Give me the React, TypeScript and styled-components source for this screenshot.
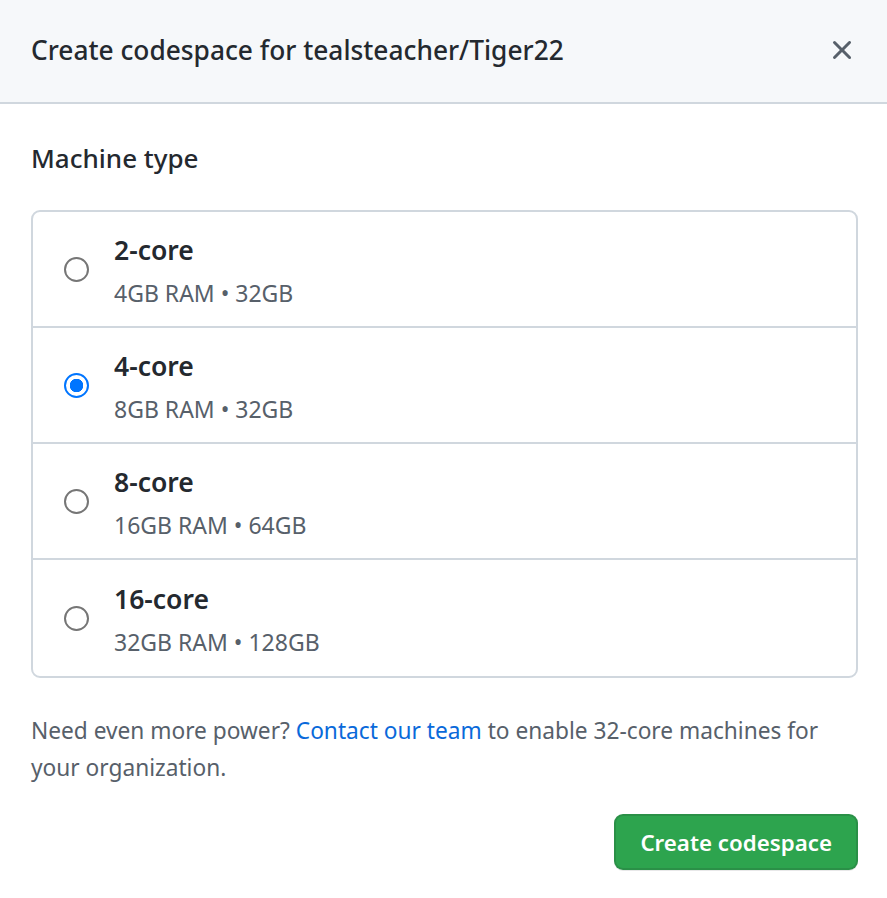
import React, { useState } from "react";
import styled, { createGlobalStyle } from "styled-components";

const GlobalStyle = createGlobalStyle`
  html, body {
    margin: 0;
    padding: 0;
    background: #ffffff;
  }
  body {
    font-family: "Noto Sans", "Open Sans", sans-serif;
    color: #24292f;
  }
`;

const machines = [
  { id: "2", name: "2-core", spec: "4GB RAM • 32GB" },
  { id: "4", name: "4-core", spec: "8GB RAM • 32GB" },
  { id: "8", name: "8-core", spec: "16GB RAM • 64GB" },
  { id: "16", name: "16-core", spec: "32GB RAM • 128GB" },
];

function App(): React.ReactElement {
  const [selected, setSelected] = useState("4");

  return (
    <Dialog>
      <GlobalStyle />
      <Header>
        <Title>Create codespace for tealsteacher/Tiger22</Title>
        <CloseButton aria-label="Close">
          <svg width="32" height="32" viewBox="0 0 16 16" fill="currentColor">
            <path d="M3.72 3.72a.75.75 0 0 1 1.06 0L8 6.94l3.22-3.22a.749.749 0 0 1 1.275.326.749.749 0 0 1-.215.734L9.06 8l3.22 3.22a.749.749 0 0 1-.326 1.275.749.749 0 0 1-.734-.215L8 9.06l-3.22 3.22a.751.751 0 0 1-1.042-.018.751.751 0 0 1-.018-1.042L6.94 8 3.72 4.78a.75.75 0 0 1 0-1.06Z" />
          </svg>
        </CloseButton>
      </Header>
      <Body>
        <SectionLabel>Machine type</SectionLabel>
        <OptionList>
          {machines.map((m) => (
            <Option key={m.id} onClick={() => setSelected(m.id)}>
              <Radio checked={selected === m.id} />
              <OptionText>
                <OptionName>{m.name}</OptionName>
                <OptionSpec>{m.spec}</OptionSpec>
              </OptionText>
            </Option>
          ))}
        </OptionList>
        <Note>
          Need even more power? <Link href="#">Contact our team</Link> to
          enable 32-core machines for your organization.
        </Note>
        <Footer>
          <CreateButton>Create codespace</CreateButton>
        </Footer>
      </Body>
    </Dialog>
  );
}

const Dialog = styled.div`
  width: 887px;
  min-height: 898px;
  background: #ffffff;
`;

const Header = styled.div`
  height: 104px;
  box-sizing: border-box;
  display: flex;
  align-items: center;
  justify-content: space-between;
  padding: 0 29px 2px 31px;
  background: #f6f8fa;
  border-bottom: 2px solid #d0d7de;
`;

const Title = styled.h1`
  margin: 0;
  font-size: 26.3px;
  font-weight: 500;
  color: #24292f;
`;

const CloseButton = styled.button`
  display: flex;
  align-items: center;
  justify-content: center;
  width: 32px;
  height: 32px;
  padding: 0;
  border: none;
  background: transparent;
  color: #57606a;
  cursor: pointer;
`;

const Body = styled.div`
  padding: 36px 29px 0 31px;
`;

const SectionLabel = styled.div`
  font-size: 26px;
  font-weight: 500;
  line-height: 36px;
  margin-bottom: 34px;
`;

const OptionList = styled.div`
  border: 2px solid #d0d7de;
  border-radius: 9px;
  overflow: hidden;
`;

const Option = styled.label`
  display: flex;
  align-items: center;
  box-sizing: border-box;
  height: 114px;
  padding: 0 0 0 31px;
  cursor: pointer;

  & + & {
    height: 116px;
    border-top: 2px solid #d0d7de;
  }

  &:last-child {
    height: 118px;
  }
`;

const Radio = styled.span<{ checked: boolean }>`
  flex: none;
  width: 25px;
  height: 25px;
  box-sizing: border-box;
  border-radius: 50%;
  border: 2px solid ${(p) => (p.checked ? "#0075ff" : "#767676")};
  background: ${(p) =>
    p.checked
      ? "radial-gradient(circle, #0075ff 0, #0075ff 6.5px, #ffffff 7px)"
      : "#ffffff"};
`;

const OptionText = styled.div`
  display: flex;
  flex-direction: column;
  margin-left: 25px;
  margin-top: 4px;
`;

const OptionName = styled.div`
  font-size: 26.5px;
  font-weight: 600;
  line-height: 34px;
  color: #24292f;
`;

const OptionSpec = styled.div`
  font-size: 23px;
  line-height: 32px;
  margin-top: 10px;
  color: #57606a;
`;

const Note = styled.p`
  max-width: 810px;
  margin: 34px 0 0 0;
  font-size: 22.7px;
  line-height: 37px;
  color: #57606a;
`;

const Link = styled.a`
  color: #0969da;
  text-decoration: none;
`;

const Footer = styled.div`
  display: flex;
  justify-content: flex-end;
  margin-top: 28px;
`;

const CreateButton = styled.button`
  height: 56px;
  padding: 0 24px;
  border: 2px solid rgba(27, 31, 36, 0.15);
  border-radius: 9px;
  background: #2da44e;
  box-shadow: 0 1px 0 rgba(27, 31, 36, 0.1);
  color: #ffffff;
  font-family: "Noto Sans", "Open Sans", sans-serif;
  font-size: 22.3px;
  font-weight: 600;
  cursor: pointer;
`;

export default App;
